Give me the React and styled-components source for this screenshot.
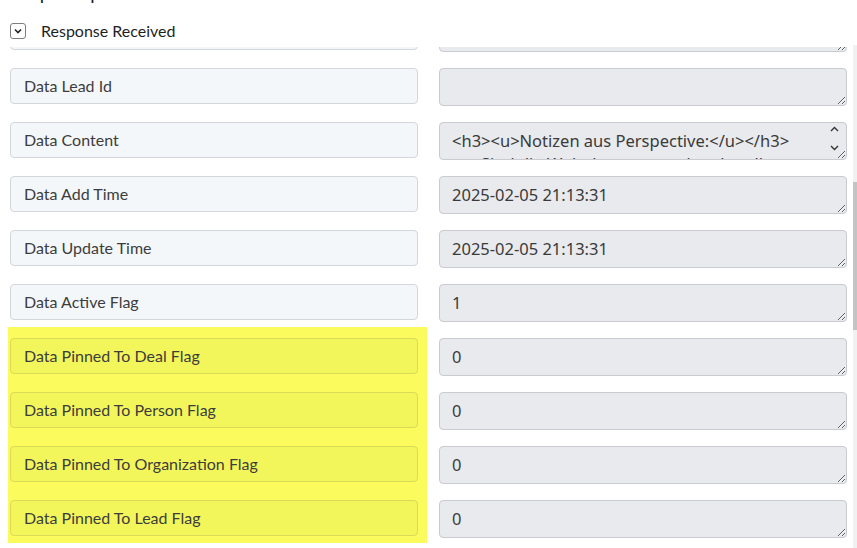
import styled, {createGlobalStyle} from "styled-components";

const GlobalStyle = createGlobalStyle`
    html, body {
        margin: 0;
        padding: 0;
        background: #ffffff;
        overflow: hidden;
    }
    body {
        font-family: Lato, "Noto Sans", sans-serif;
        color: #333;
    }
`;

const Page = styled.div`
    position: relative;
    height: 548px;
    overflow: hidden;
    padding: 0 10px;
`;

const Header = styled.div`
    position: relative;
    z-index: 1;
    height: 47px;
    background: #ffffff;
    display: flex;
    flex-direction: column;
`;

const Title = styled.div`
    margin-top: -15px;
    font-size: 16px;
    line-height: 18px;
    font-weight: 600;
    color: #222;
    height: 18px;
`;

const Toggle = styled.div`
    display: flex;
    align-items: center;
    gap: 15px;
    margin-top: 19px;
    font-size: 16px;
    line-height: 18px;
    color: #1f1f1f;
`;

const CheckBox = styled.span`
    width: 16px;
    height: 16px;
    box-sizing: border-box;
    border: 1px solid #7d7d7d;
    border-radius: 3px;
    display: flex;
    align-items: center;
    justify-content: center;
    background: #fff;
`;

const List = styled.div`
    margin-top: -44px;
    display: flex;
    flex-direction: column;
`;

const Row = styled.div`
    display: grid;
    grid-template-columns: 419px 1fr;
    height: 54px;
    margin-left: -2px;
`;

const LabelCell = styled.div`
    padding: 11px 9px 7px 2px;
    background: ${p => (p.$marked ? "#fbfb5e" : "transparent")};
`;

const Label = styled.div`
    height: 36px;
    box-sizing: border-box;
    padding: 0 13px 1px;
    display: flex;
    align-items: center;
    font-size: 16px;
    color: #3d3d3d;
    border-radius: 4px;
    border: 1px solid ${p => (p.$marked ? "#d9da5a" : "#d3d6db")};
    background: ${p => (p.$marked ? "#f3f65b" : "#f4f7fa")};
`;

const ValueCell = styled.div`
    position: relative;
    padding: 11px 0 0 12px;
`;

const Value = styled.textarea`
    display: block;
    width: 100%;
    height: 38px;
    box-sizing: border-box;
    margin: 0;
    padding: 6px 30px 0 12px;
    font-family: "Noto Sans", "Open Sans", sans-serif;
    font-size: 16.5px;
    line-height: 23px;
    color: #3a3a3a;
    background: #e9eaed;
    border: 1px solid #c9cbd0;
    border-radius: 4px;
    resize: vertical;
    overflow: hidden;
    outline: none;
`;

// small scroll arrows drawn over the content textarea
const Arrows = styled.div`
    position: absolute;
    right: 8px;
    top: 15px;
    display: flex;
    flex-direction: column;
    gap: 13px;
    pointer-events: none;
`;

const ScrollTrack = styled.div`
    position: absolute;
    right: 0;
    top: 45px;
    bottom: 0;
    width: 4px;
    background: #f1f1f1;
`;

const ScrollThumb = styled.div`
    margin-top: 137px;
    height: 148px;
    background: #c4c4c4;
`;

const rows = [
    {label: "Data Deal Id", value: ""},
    {label: "Data Lead Id", value: ""},
    {
        label: "Data Content",
        value: "<h3><u>Notizen aus Perspective:</u></h3>\n<p>Sind die Wohnkosten aus der aktuellen Anfrage geklärt?</p>",
        scroll: true
    },
    {label: "Data Add Time", value: "2025-02-05 21:13:31"},
    {label: "Data Update Time", value: "2025-02-05 21:13:31"},
    {label: "Data Active Flag", value: "1"},
    {label: "Data Pinned To Deal Flag", value: "0", marked: true},
    {label: "Data Pinned To Person Flag", value: "0", marked: true},
    {label: "Data Pinned To Organization Flag", value: "0", marked: true},
    {label: "Data Pinned To Lead Flag", value: "0", marked: true},
];

const Chevron = ({up}) => (
    <svg width="9" height="6" viewBox="0 0 9 6">
        <path d={up ? "M1 5 L4.5 1.5 L8 5" : "M1 1 L4.5 4.5 L8 1"} fill="none" stroke="#333" strokeWidth="1.4"/>
    </svg>
);

export default function App() {
    return (
        <Page>
            <GlobalStyle/>
            <Header>
                <Title>Sample Response</Title>
                <Toggle>
                    <CheckBox>
                        <svg width="10" height="8" viewBox="0 0 10 8">
                            <path d="M2 2.5 L5 5.5 L8 2.5" fill="none" stroke="#222" strokeWidth="1.6"/>
                        </svg>
                    </CheckBox>
                    Response Received
                </Toggle>
            </Header>
            <List>
                {rows.map(r => (
                    <Row key={r.label}>
                        <LabelCell $marked={r.marked}>
                            <Label $marked={r.marked}>{r.label}</Label>
                        </LabelCell>
                        <ValueCell>
                            <Value readOnly value={r.value}/>
                            {r.scroll && (
                                <Arrows>
                                    <Chevron up/>
                                    <Chevron/>
                                </Arrows>
                            )}
                        </ValueCell>
                    </Row>
                ))}
            </List>
            <ScrollTrack>
                <ScrollThumb/>
            </ScrollTrack>
        </Page>
    );
}
